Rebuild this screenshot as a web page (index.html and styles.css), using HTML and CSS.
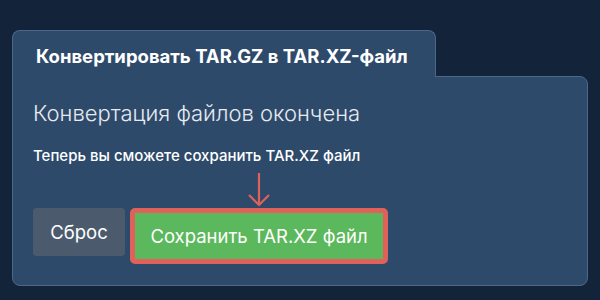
FILE: index.html
```html
<!DOCTYPE html>
<html lang="ru">
<head>
<meta charset="utf-8">
<link rel="stylesheet" href="styles.css">
</head>
<body>
<div class="wrap">
  <div class="tab">Конвертировать TAR.GZ в TAR.XZ-файл</div>
  <div class="panel">
    <h2 class="heading">Конвертация файлов окончена</h2>
    <p class="note">Теперь вы сможете сохранить TAR.XZ файл</p>
    <div class="actions">
      <button class="btn reset">Сброс</button>
      <div class="save-wrap">
        <svg class="arrow" width="24" height="36" viewBox="0 0 24 36">
          <path d="M12 1 V33 M2 23 L12 33 L22 23" fill="none" stroke="#e0605a" stroke-width="2.2"/>
        </svg>
        <button class="btn save">Сохранить TAR.XZ файл</button>
      </div>
    </div>
  </div>
</div>
</body>
</html>
```
FILE: styles.css
```css
html, body {
  margin: 0;
  padding: 0;
}
body {
  background: #12233a;
  width: 600px;
  height: 300px;
  font-family: Inter, "Noto Sans", sans-serif;
  overflow: hidden;
}
.wrap {
  padding: 30px 0 0 12px;
  width: 576px;
}
.tab {
  display: inline-block;
  box-sizing: border-box;
  width: 424px;
  height: 47px;
  background: #2e4a6a;
  border: 1px solid #4d6788;
  border-bottom: none;
  border-radius: 8px 8px 0 0;
  color: #ffffff;
  font-weight: 700;
  font-size: 18.5px;
  line-height: 24px;
  padding: 13px 0 0 23px;
  position: relative;
  z-index: 1;
  margin-bottom: -1px;
}
.panel {
  box-sizing: border-box;
  width: 576px;
  height: 210px;
  background: #2e4a6a;
  border: 1px solid #4d6788;
  border-radius: 0 8px 8px 8px;
  padding: 21px 20px 0 20px;
}
.heading {
  margin: 0;
  font-weight: 300;
  font-size: 22px;
  color: #e6ebf1;
  line-height: 30px;
}
.note {
  margin: 18px 0 0 0;
  font-size: 15px;
  font-weight: 500;
  color: #ffffff;
  line-height: 20px;
}
.actions {
  display: flex;
  align-items: flex-start;
  gap: 5px;
  margin-top: 5px;
}
.btn {
  font-family: Inter, "Noto Sans", sans-serif;
  border: none;
  color: #ffffff;
  cursor: pointer;
  padding: 0;
}
.reset {
  width: 92px;
  height: 48px;
  margin-top: 37px;
  background: #4b5b6d;
  border-radius: 4px;
  font-size: 18.5px;
  font-weight: 400;
}
.save-wrap {
  display: flex;
  flex-direction: column;
  align-items: center;
}
.arrow {
  display: block;
  margin: 1px 0 0 0;
}
.save {
  box-sizing: border-box;
  width: 258px;
  height: 56px;
  background: #5cb85c;
  border: 5px solid #e0605a;
  border-radius: 5px;
  font-size: 18.5px;
  font-weight: 400;
}
```
